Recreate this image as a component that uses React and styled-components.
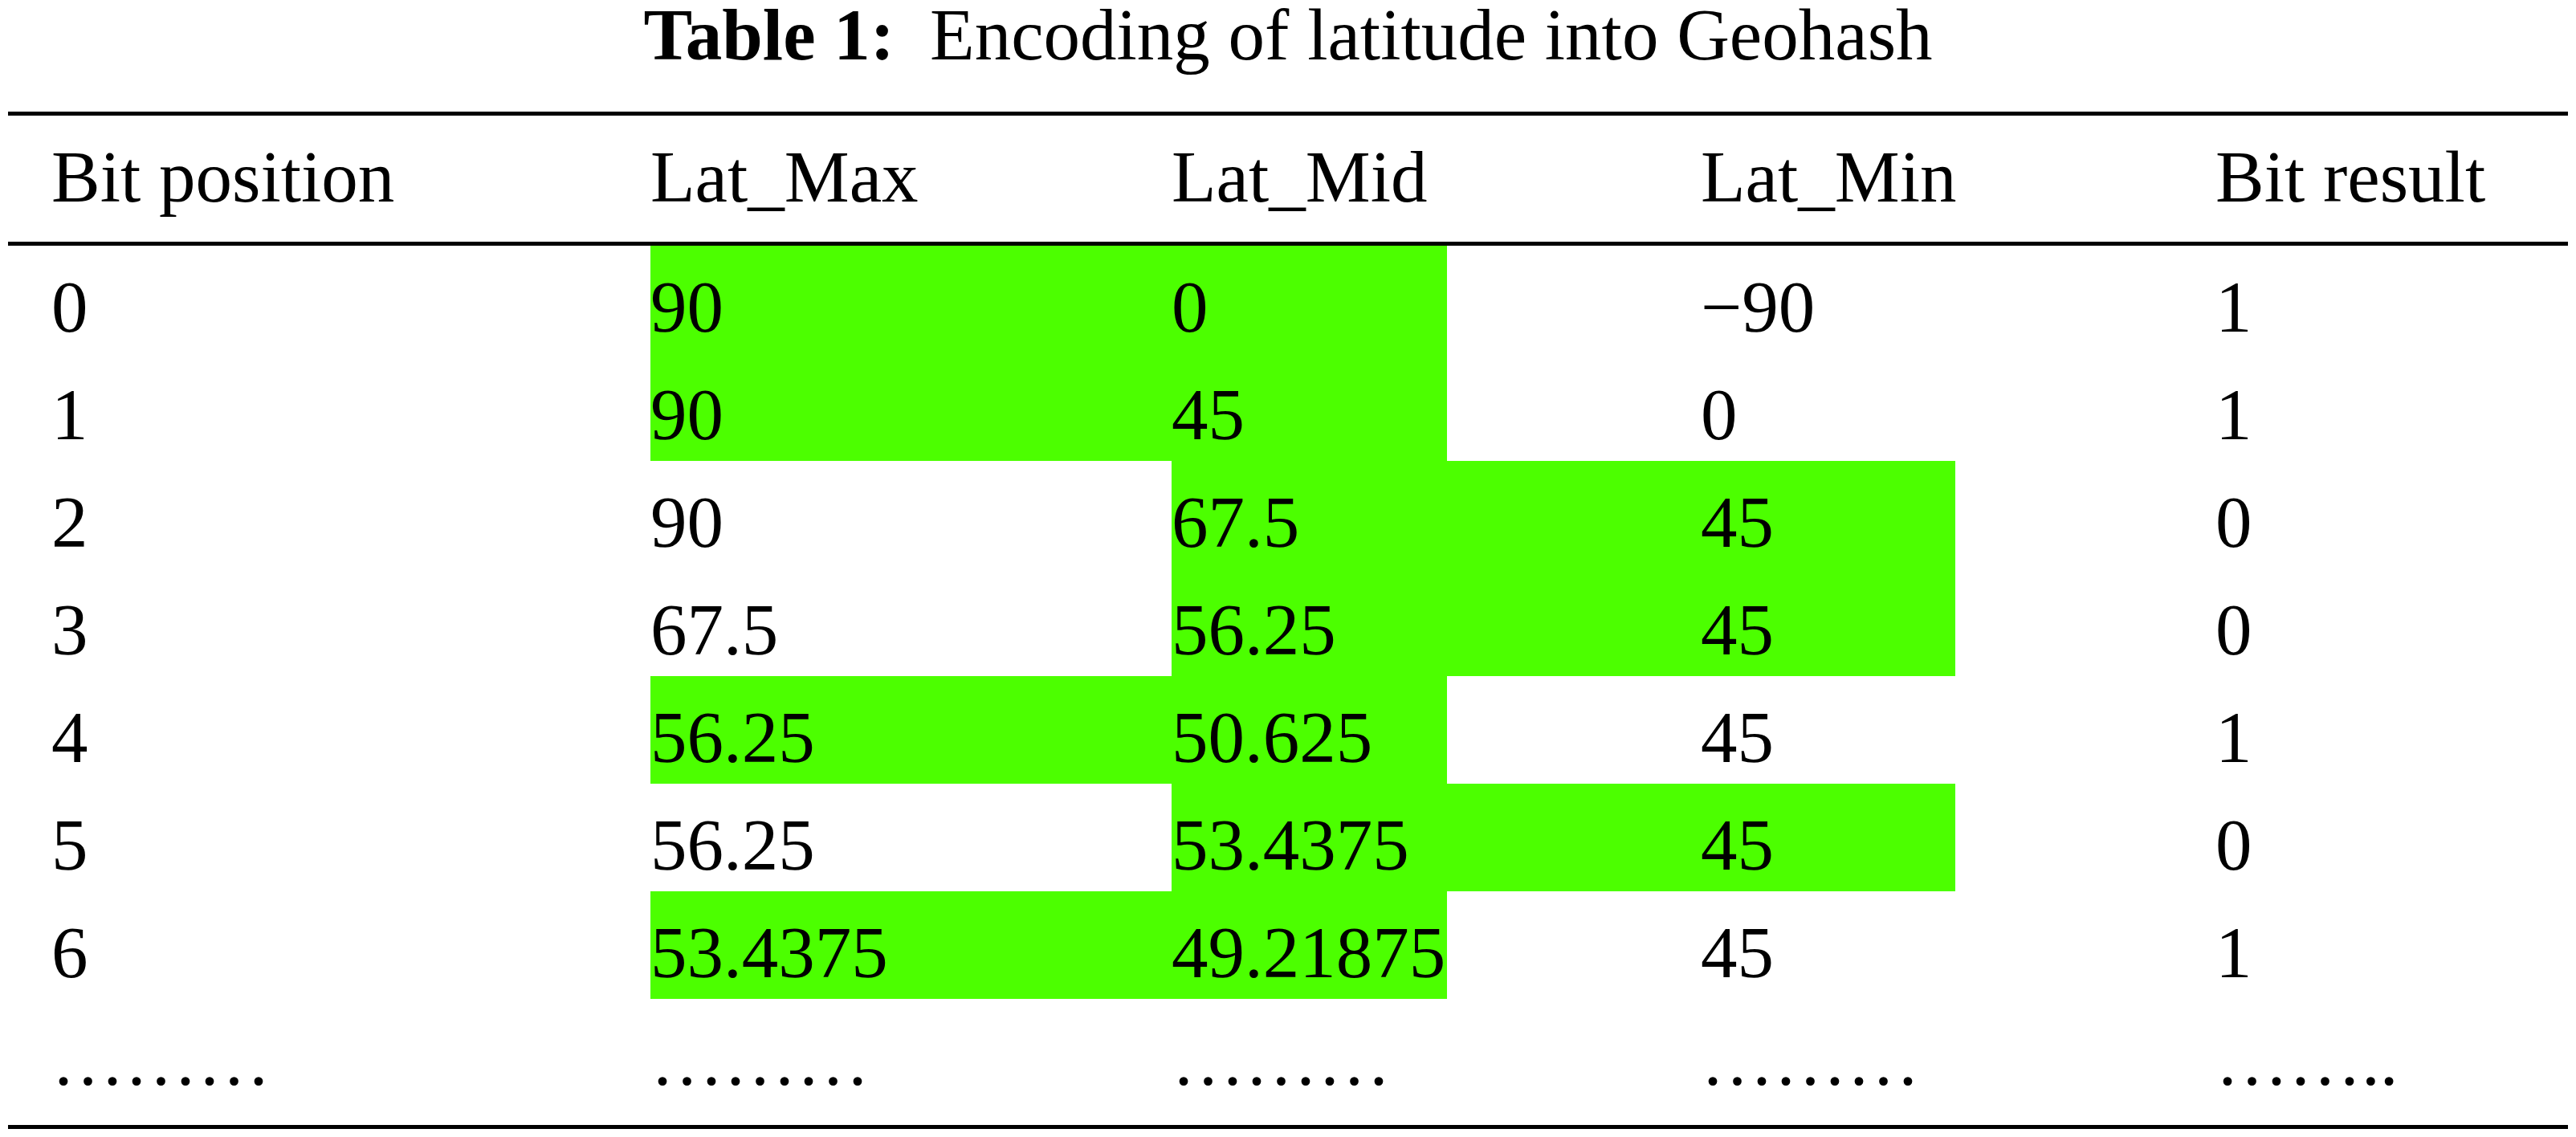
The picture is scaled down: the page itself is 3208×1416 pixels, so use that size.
import React from "react";
import styled, { createGlobalStyle } from "styled-components";

const GlobalStyle = createGlobalStyle`
  html, body {
    margin: 0;
    padding: 0;
    background: #ffffff;
  }
  body {
    font-family: "Liberation Serif", "Times New Roman", serif;
    color: #000000;
  }
`;

const GREEN = "#4cff00";

// column geometry: track width, and width of the widest text where needed
const columns = [
  { width: 746 },
  { width: 649 },
  { width: 659, content: 343 },
  { width: 641, content: 317 },
  { width: 400 }
];

const Page = styled.div`
  width: 3208px;
  font-size: 91px;
`;

const Caption = styled.div`
  text-align: center;
  line-height: 87px;
  height: 87px;
  margin: 0 0 52px;
  white-space: nowrap;
`;

const CaptionLabel = styled.span`
  display: inline-block;
  font-weight: bold;
`;

const CaptionText = styled.span`
  display: inline-block;
  margin-left: 44px;
`;

const Table = styled.div`
  margin-left: 10px;
  width: 3188px;
  border-top: 5px solid #000;
  border-bottom: 5px solid #000;
`;

const Row = styled.div`
  display: grid;
  grid-template-columns: ${columns.map(c => c.width + "px").join(" ")};
  padding-left: 54px;
  padding-bottom: ${props => (props.$loose ? "23px" : "0")};
  border-bottom: ${props => (props.$ruled ? "5px solid #000" : "none")};
`;

const Cell = styled.div`
  justify-self: start;
  box-sizing: border-box;
  padding-top: 20px;
  line-height: 114px;
  white-space: nowrap;
  width: ${props =>
    props.$fill === "full"
      ? "100%"
      : props.$fill === "content"
      ? props.$w + "px"
      : "auto"};
  background: ${props => (props.$fill ? GREEN : "transparent")};
`;

const header = ["Bit position", "Lat_Max", "Lat_Mid", "Lat_Min", "Bit result"];

// hl: [first highlighted column, last highlighted column]
const rows = [
  { cells: ["0", "90", "0", "\u221290", "1"], hl: [1, 2] },
  { cells: ["1", "90", "45", "0", "1"], hl: [1, 2] },
  { cells: ["2", "90", "67.5", "45", "0"], hl: [2, 3] },
  { cells: ["3", "67.5", "56.25", "45", "0"], hl: [2, 3] },
  { cells: ["4", "56.25", "50.625", "45", "1"], hl: [1, 2] },
  { cells: ["5", "56.25", "53.4375", "45", "0"], hl: [2, 3] },
  { cells: ["6", "53.4375", "49.21875", "45", "1"], hl: [1, 2] }
];

const dots = [
  "\u2026\u2026\u2026",
  "\u2026\u2026\u2026",
  "\u2026\u2026\u2026",
  "\u2026\u2026\u2026",
  "\u2026\u2026.."
];

const fillFor = (hl, i) => {
  if (i < hl[0] || i > hl[1]) return null;
  return i < hl[1] ? "full" : "content";
};

const App = () => {
  return (
    <Page>
      <GlobalStyle />
      <Caption>
        <CaptionLabel>Table 1:</CaptionLabel>
        <CaptionText>Encoding of latitude into Geohash</CaptionText>
      </Caption>
      <Table>
        <Row $ruled $loose>
          {header.map(h => (
            <Cell key={h}>{h}</Cell>
          ))}
        </Row>
        {rows.map((row, r) => (
          <Row key={r}>
            {row.cells.map((c, i) => (
              <Cell key={i} $fill={fillFor(row.hl, i)} $w={columns[i].content}>
                {c}
              </Cell>
            ))}
          </Row>
        ))}
        <Row $loose>
          {dots.map((d, i) => (
            <Cell key={i}>{d}</Cell>
          ))}
        </Row>
      </Table>
    </Page>
  );
};

export default App;
